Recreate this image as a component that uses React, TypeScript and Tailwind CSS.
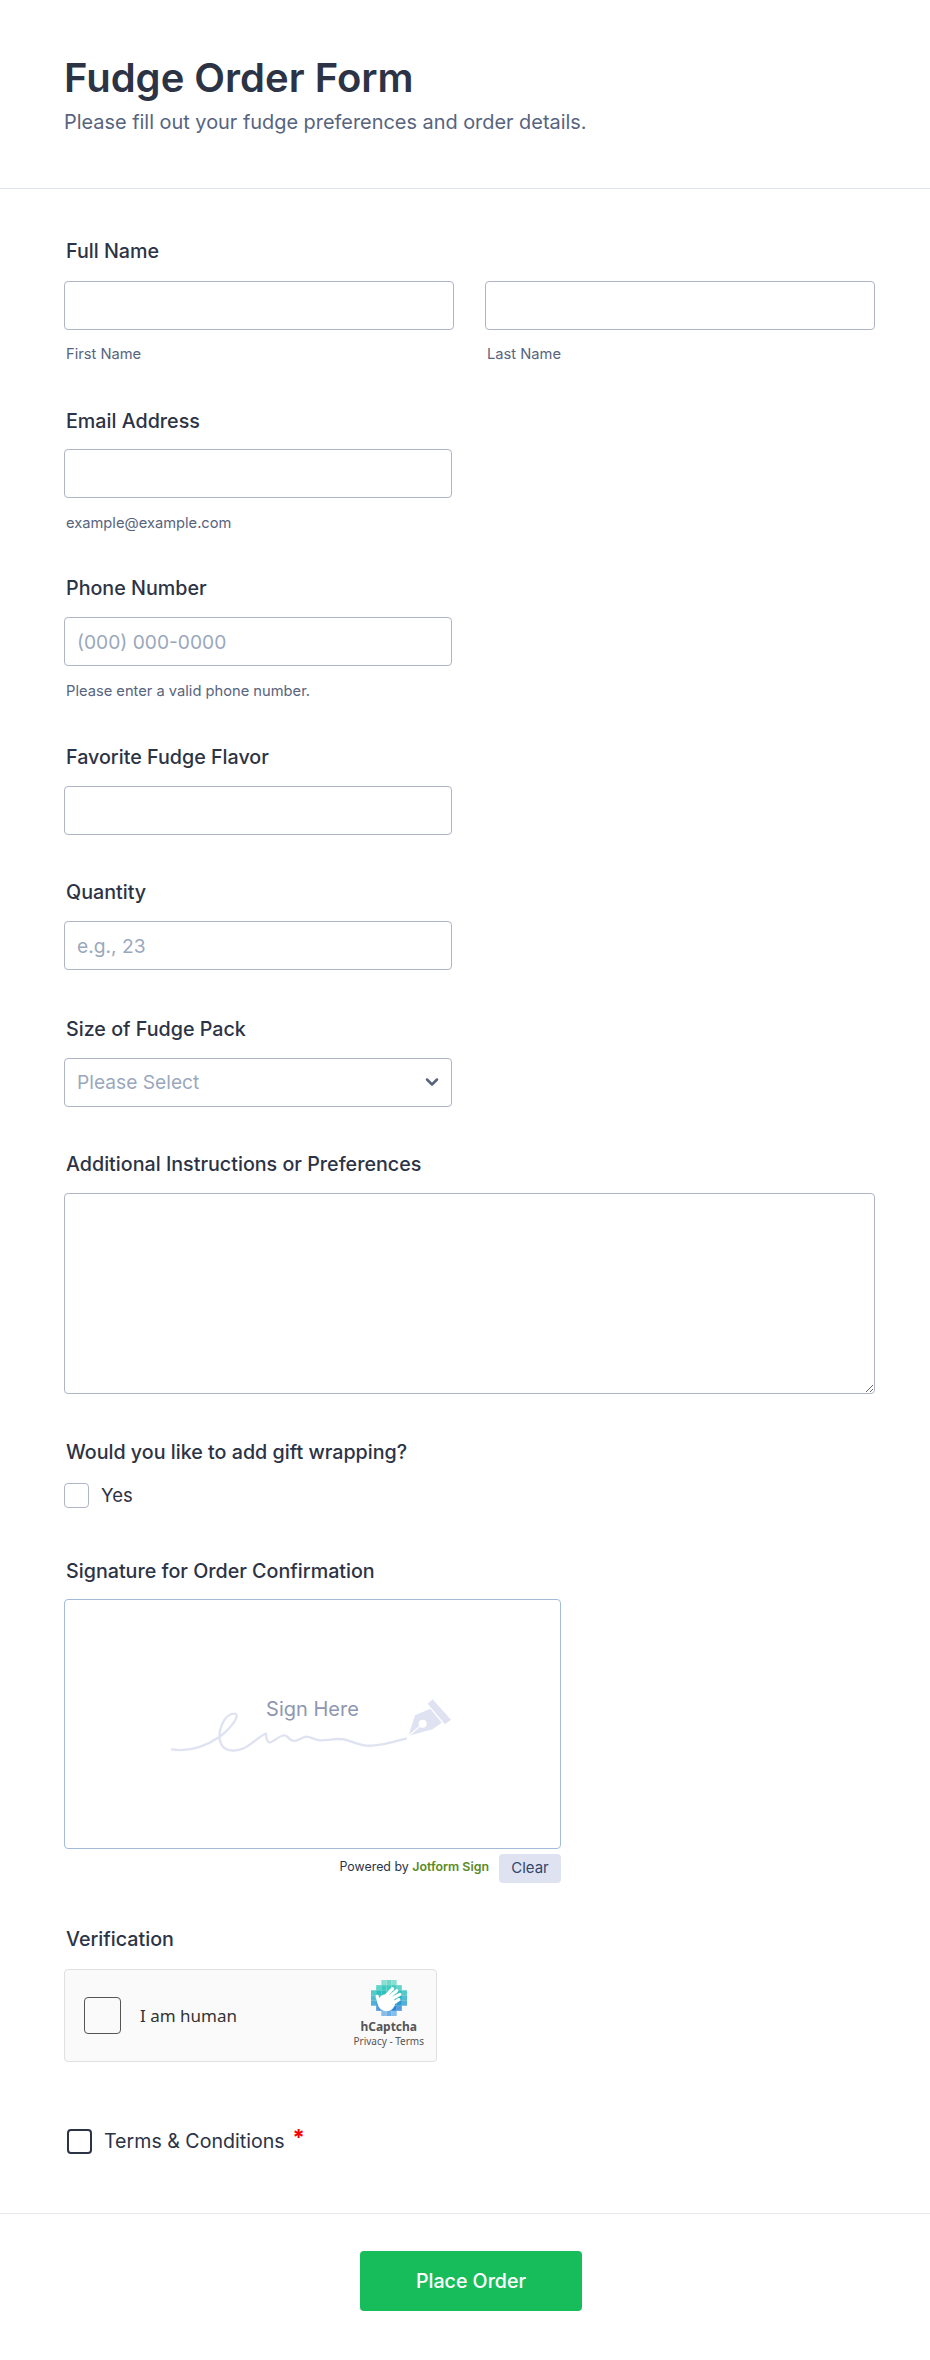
import { ChevronDown } from 'lucide-react'

// --- Fudge order form, single column card ---

const inputClass =
  'h-[49px] w-full rounded border border-[#b0b5c6] bg-white px-3 text-[19.200px] text-[#2c3345] outline-none placeholder:text-[#9aa8bd]'

function Label({ children, className = '' }: { children: React.ReactNode; className?: string }) {
  return <div className={`ml-0.5 h-7 text-[19.700px] leading-7 font-medium text-[#2c3345] ${className}`}>{children}</div>
}

function Sub({ children, className = 'mt-[14px]' }: { children: React.ReactNode; className?: string }) {
  return <div className={`ml-0.5 h-5 text-[14.700px] leading-5 text-[#57647e] ${className}`}>{children}</div>
}

const LOGO_ROWS = [
  { x: 2, n: 3, color: '#6fd8c8' },
  { x: 1, n: 5, color: '#3fcbbf' },
  { x: 0, n: 7, color: '#2cbfbd' },
  { x: 0, n: 7, color: '#27aec6' },
  { x: 0, n: 7, color: '#2a9bd0' },
  { x: 1, n: 5, color: '#2a86d4' },
  { x: 2, n: 3, color: '#6aaee6' },
]

function HCaptchaLogo() {
  return (
    <svg width="36" height="36" viewBox="0 0 35 35">
      {LOGO_ROWS.map((row, y) =>
        Array.from({ length: row.n }, (_, i) => (
          <rect
            key={`${y}-${i}`}
            x={(row.x + i) * 5}
            y={y * 5}
            width="5"
            height="5"
            fill={row.color}
            opacity={i === 0 || i === row.n - 1 ? 0.8 : 1}
          />
        )),
      )}
      <circle cx="15" cy="22" r="8.500" fill="#fff" />
      <g stroke="#fff" strokeWidth="3.200" strokeLinecap="round">
        <path d="M14 16 L21 8.500" />
        <path d="M17 17 L25 10.500" />
        <path d="M19 19 L28 14" />
        <path d="M21 23 L27 19" />
        <path d="M8 23 L6 16" />
      </g>
    </svg>
  )
}

function SignatureMark() {
  return (
    <svg className="absolute top-[72px] left-[96px]" width="300" height="100" viewBox="0 0 900 300">
      <path
        d="M33 232 C80 240 130 225 175 195 C215 165 240 125 220 125 C190 125 165 180 180 215 C195 245 240 240 270 215 C290 200 310 185 315 185 C315 200 320 215 330 210 C345 205 365 180 380 195 C395 215 410 205 430 195 C445 190 460 205 480 205 C510 205 530 195 560 205 C590 215 610 225 640 220 C670 218 700 208 735 200"
        fill="none"
        stroke="#dfe3f1"
        strokeWidth="7"
        strokeLinecap="round"
      />
      <path d="M742 192 L762 130 L808 110 L842 152 L815 172 Z" fill="#dfe3f1" />
      <path d="M800 95 L815 82 L870 143 L852 157 Z" fill="#dfe3f1" />
      <circle cx="785" cy="155" r="12" fill="#fff" />
      <path d="M742 192 L778 162" stroke="#fff" strokeWidth="4" />
    </svg>
  )
}

export default function App() {
  return (
    <div className="min-h-[2360px] w-[930px] bg-white font-['Inter',sans-serif] text-[#2c3345]">
      {/* --- Header --- */}
      <header className="h-[189px] border-b border-[#dfe3ec] pt-[54px] pl-16">
        <h1 className="text-[40px] leading-[48px] font-semibold">Fudge Order Form</h1>
        <p className="mt-1.5 text-[19.900px] leading-7 text-[#57647e]">Please fill out your fudge preferences and order details.</p>
      </header>

      <main className="pt-[48px] pr-[55px] pl-16">
        <Label className="mb-[16px]">Full Name</Label>
        <div className="grid grid-cols-2 gap-[31px]">
          <div>
            <input className={inputClass} />
            <Sub>First Name</Sub>
          </div>
          <div>
            <input className={inputClass} />
            <Sub>Last Name</Sub>
          </div>
        </div>

        <div className="mt-[43px] w-[388px]">
          <Label className="mb-[14px]">Email Address</Label>
          <input className={inputClass} />
          <Sub className="mt-[15px]">example@example.com</Sub>

          <Label className="mt-[41px] mb-[15px]">Phone Number</Label>
          <input className={inputClass} placeholder="(000) 000-0000" />
          <Sub className="mt-[15px]">Please enter a valid phone number.</Sub>

          <Label className="mt-[42px] mb-[15px]">Favorite Fudge Flavor</Label>
          <input className={inputClass} />

          <Label className="mt-[43px] mb-[15px]">Quantity</Label>
          <input className={inputClass} placeholder="e.g., 23" />

          <Label className="mt-[45px] mb-[15px]">Size of Fudge Pack</Label>
          <div className="relative">
            <select className={`${inputClass} appearance-none text-[#9aa8bd]`}>
              <option>Please Select</option>
            </select>
            <ChevronDown className="absolute top-[14px] right-[10px] h-5 w-5 text-[#57647e]" strokeWidth={3} />
          </div>
        </div>

        <Label className="mt-[43px] mb-[15px]">Additional Instructions or Preferences</Label>
        <textarea className="block h-[201px] w-full rounded border border-[#b0b5c6] bg-white p-3 outline-none" />

        <Label className="mt-[44px] mb-[17px]">Would you like to add gift wrapping?</Label>
        <label className="flex h-[25px] items-center gap-3 text-[18.500px]">
          <input type="checkbox" className="h-[25px] w-[25px] appearance-none rounded border border-[#b0b5c6] bg-white" />
          Yes
        </label>

        {/* --- Signature --- */}
        <Label className="mt-[49px] mb-[14px]">Signature for Order Confirmation</Label>
        <div className="w-[497px]">
          <div className="relative flex h-[250px] justify-center rounded border border-[#a3bbd8] bg-white">
            <span className="mt-[95px] text-[20px] leading-7 text-[#8e97b0]">Sign Here</span>
            <SignatureMark />
          </div>
          <div className="mt-[5px] flex items-center justify-end gap-[10px]">
            <span className="-mt-0.5 text-[12.400px] text-[#2c3345]">
              Powered by <b className="font-semibold text-[#5b8a1e]">Jotform Sign</b>
            </span>
            <button className="h-[29px] w-[62px] rounded bg-[#dfe3f1] text-[15px] text-[#33456b]">Clear</button>
          </div>
        </div>

        {/* --- Verification --- */}
        <Label className="mt-[42px] mb-[16px]">Verification</Label>
        <div className="flex h-[93px] w-[373px] items-center justify-between rounded border border-[#e0e0e0] bg-[#fafafa] pr-3 pl-[19px] font-['Noto_Sans',sans-serif]">
          <div className="flex items-center gap-[19px]">
            <div className="h-[37px] w-[37px] rounded border border-[#555] bg-[#fafafa]" />
            <span className="text-[17px] text-[#333]">I am human</span>
          </div>
          <div className="-mt-1 flex flex-col items-center">
            <HCaptchaLogo />
            <span className="mt-1 text-[12px] leading-[14px] font-bold text-[#555]">hCaptcha</span>
            <span className="text-[10px] leading-[14px] text-[#555]">Privacy - Terms</span>
          </div>
        </div>

        <div className="mt-[65px] ml-[3px] flex items-center gap-3 text-[19.600px]">
          <input type="checkbox" className="h-[25px] w-[25px] appearance-none rounded border-2 border-[#2c3345] bg-white" />
          <span>Terms &amp; Conditions</span>
          <span className="-mt-2 -ml-1 text-[22px] font-bold text-[#ff0000]">*</span>
        </div>
      </main>

      {/* --- Footer --- */}
      <footer className="mt-[57px] flex justify-center border-t border-[#e6e8f0] pt-[37px] pl-3">
        <button className="h-[60px] w-[222px] rounded bg-[#18bd5b] text-[19.600px] font-medium text-white">Place Order</button>
      </footer>
    </div>
  )
}
